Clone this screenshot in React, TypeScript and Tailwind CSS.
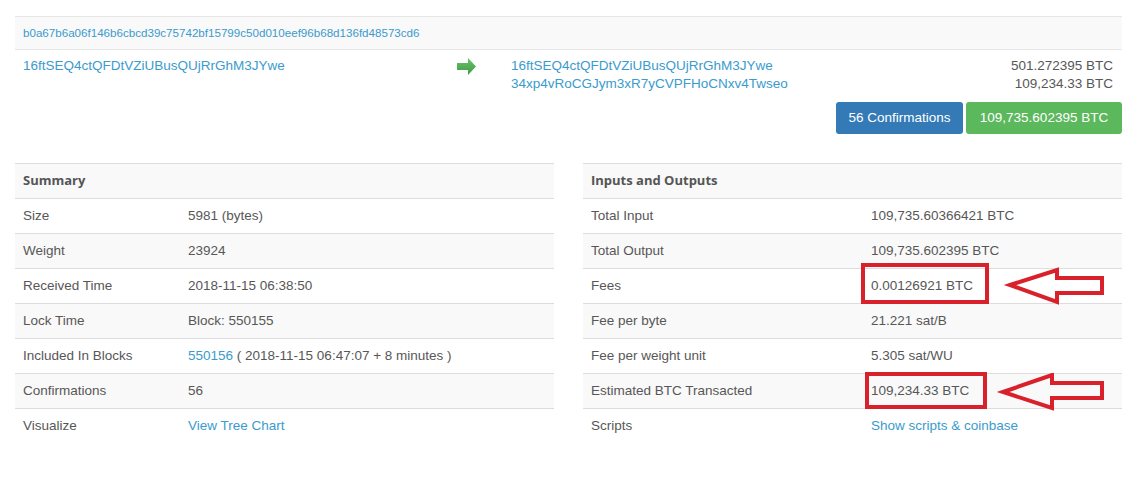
import React from "react";

const summaryRows: { label: string; value: React.ReactNode }[] = [
  { label: "Size", value: "5981 (bytes)" },
  { label: "Weight", value: "23924" },
  { label: "Received Time", value: "2018-11-15 06:38:50" },
  { label: "Lock Time", value: "Block: 550155" },
  {
    label: "Included In Blocks",
    value: (
      <>
        <a className="text-[#3a9bcd]">550156</a> ( 2018-11-15 06:47:07 + 8 minutes )
      </>
    ),
  },
  { label: "Confirmations", value: "56" },
  { label: "Visualize", value: <a className="text-[#3a9bcd]">View Tree Chart</a> },
];

const ioRows: { label: string; value: React.ReactNode }[] = [
  { label: "Total Input", value: "109,735.60366421 BTC" },
  { label: "Total Output", value: "109,735.602395 BTC" },
  { label: "Fees", value: "0.00126921 BTC" },
  { label: "Fee per byte", value: "21.221 sat/B" },
  { label: "Fee per weight unit", value: "5.305 sat/WU" },
  { label: "Estimated BTC Transacted", value: "109,234.33 BTC" },
  { label: "Scripts", value: <a className="text-[#3a9bcd]">Show scripts &amp; coinbase</a> },
];

function InfoTable({ title, rows, labelWidth }: { title: string; rows: typeof summaryRows; labelWidth: string }) {
  return (
    <div className="w-[539px]">
      <div className="h-[35px] flex items-center px-2 bg-[#f9f9f9] border-t border-[#dddddd] font-['Open_Sans'] font-bold text-[13px] text-[#555]">
        {title}
      </div>
      {rows.map((row, i) => (
        <div
          key={row.label}
          className={`h-[35px] flex items-center border-t border-[#dddddd] ${i % 2 === 1 ? "bg-[#f9f9f9]" : "bg-white"}`}
        >
          <div className={`${labelWidth} shrink-0 px-2`}>{row.label}</div>
          <div className="px-2">{row.value}</div>
        </div>
      ))}
    </div>
  );
}

function RedArrow({ left, top, points }: { left: number; top: number; points: string }) {
  return (
    <svg className="absolute" style={{ left, top }} width="112" height="40" viewBox="0 0 112 40">
      <polygon points={points} fill="none" stroke="#d8212b" strokeWidth="4" strokeLinejoin="miter" />
    </svg>
  );
}

export default function App() {
  return (
    <div className="relative w-[1140px] h-[491px] bg-white font-['Liberation_Sans',Arial,sans-serif] text-[13.5px] text-[#575757]">
      <div className="ml-[15px] w-[1107px] pt-[16px]">
        <div className="h-[34px] flex items-center px-2 bg-[#f9f9f9] border-y border-[#e6e6e6] text-[11.6px] text-[#3a9bcd]">
          b0a67b6a06f146b6cbcd39c75742bf15799c50d010eef96b68d136fd48573cd6
        </div>
        <div className="flex pt-[7px] leading-[18px]">
          <div className="w-[442px] pl-2 text-[#3a9bcd]">16ftSEQ4ctQFDtVZiUBusQUjRrGhM3JYwe</div>
          <div className="w-[54px] pt-[1px]">
            <svg width="20" height="18" viewBox="0 0 20 18">
              <defs>
                <linearGradient id="ga" x1="0" y1="0" x2="0" y2="1">
                  <stop offset="0" stopColor="#6cc46a" />
                  <stop offset="1" stopColor="#3f9a44" />
                </linearGradient>
              </defs>
              <polygon points="0,5 11,5 11,0 19,8.5 11,17 11,12 0,12" fill="url(#ga)" />
            </svg>
          </div>
          <div className="flex-1 text-[#3a9bcd]">
            <div>16ftSEQ4ctQFDtVZiUBusQUjRrGhM3JYwe</div>
            <div>34xp4vRoCGJym3xR7yCVPFHoCNxv4Twseo</div>
          </div>
          <div className="pr-[9px] text-right">
            <div>501.272395 BTC</div>
            <div>109,234.33 BTC</div>
          </div>
        </div>
        <div className="flex justify-end gap-[3px] mt-[9px]">
          <button className="h-8 w-[127px] rounded-[3px] bg-[#337ab7] text-white text-[13.5px]">56 Confirmations</button>
          <button className="h-8 w-[156px] rounded-[3px] bg-[#5cb85c] text-white text-[13.5px]">109,735.602395 BTC</button>
        </div>
        <div className="flex justify-between mt-[29px]">
          <InfoTable title="Summary" rows={summaryRows} labelWidth="w-[165px]" />
          <InfoTable title="Inputs and Outputs" rows={ioRows} labelWidth="w-[280px]" />
        </div>
      </div>

      <div className="absolute left-[861px] top-[263px] w-[128px] h-[41px] border-4 border-[#d8212b]" />
      <div className="absolute left-[865px] top-[372px] w-[122px] h-[37px] border-4 border-[#d8212b]" />
      <RedArrow left={1000} top={266} points="10,19 57,4 57,12 102,12 102,27 57,27 57,36" />
      <RedArrow left={993} top={373} points="10,19 59,2 59,10 109,10 109,25 59,25 59,35" />
    </div>
  );
}
